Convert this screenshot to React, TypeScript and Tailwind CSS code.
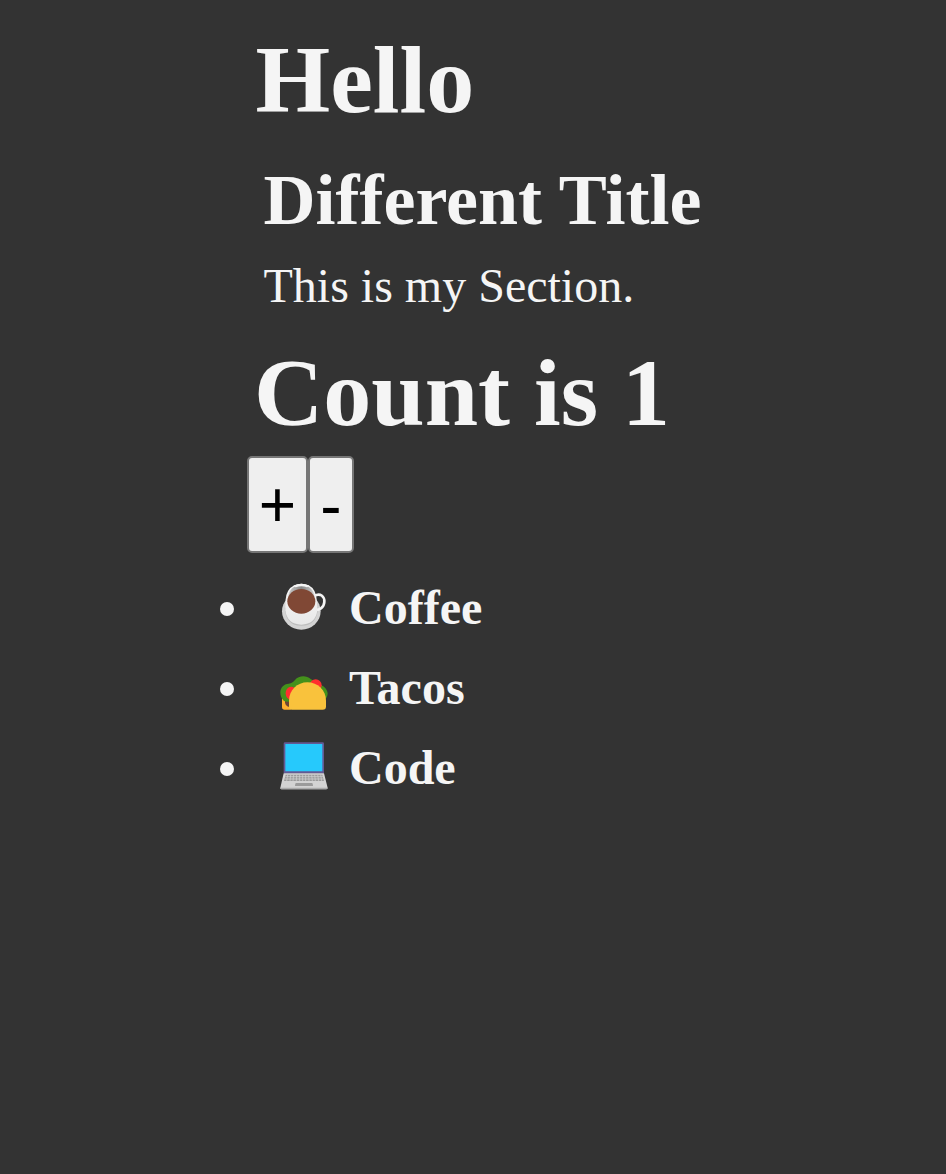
import { useState, type ReactNode } from "react";

function CoffeeIcon() {
  return (
    <svg className="h-20 w-[70px]" viewBox="0 0 210 240" aria-hidden="true">
      <defs>
        <linearGradient id="cup" x1="0" y1="0" x2="0" y2="1">
          <stop offset="0" stopColor="#f7f7f7" />
          <stop offset="1" stopColor="#e8e8e8" />
        </linearGradient>
        <linearGradient id="inner" x1="0" y1="0" x2="1" y2="0">
          <stop offset="0" stopColor="#d0d0d0" />
          <stop offset=".5" stopColor="#858585" />
          <stop offset="1" stopColor="#d0d0d0" />
        </linearGradient>
      </defs>
      <g transform="translate(0 21)">
        <ellipse cx="94" cy="109" rx="58" ry="55" fill="#d3d3d3" />
        <path d="M44 98Q47 152 94 152Q141 152 144 98Z" fill="#bdbdbd" />
        <path d="M132 63C151 52 164 64 163 81C162 97 148 108 130 103" fill="none" stroke="#f4f4f4" strokeWidth="8" />
        <path d="M47 73Q50 42 73 31Q94 22 116 31Q137 42 140 73L142 106Q137 148 94 149Q51 148 46 106Z" fill="url(#cup)" />
        <path d="M54 67Q59 31 94 31Q129 31 134 67Z" fill="url(#inner)" />
        <path d="M70 32Q94 21 118 32L111 37Q94 31 77 37Z" fill="#f5f5f5" />
        <ellipse cx="94" cy="79" rx="42" ry="37" fill="#804835" />
      </g>
    </svg>
  );
}

function TacoIcon() {
  return (
    <svg className="h-20 w-[70px]" viewBox="0 0 210 240" aria-hidden="true">
      <g transform="translate(0 51)">
        <path d="M36 94H62V134H44Q36 134 36 126Z" fill="#ffb02e" />
        <path d="M45 94H64V125H54Q46 122 45 113Z" fill="#6d4534" />
        <path d="M42 108C34 101 31 92 31 82C31 68 41 57 56 56C65 55 69 52 75 45C86 32 108 30 122 42L151 59C164 64 172 74 173 85C173 94 169 101 162 106L50 110Z" fill="#44911b" />
        <circle cx="137" cy="61" r="18" fill="#ff2e2e" />
        <path d="M73 68C57 60 47 73 47 85C47 94 51 101 59 104Z" fill="#ff2e2e" />
        <path d="M57 107C57 76 82 52 112 52C143 52 168 76 168 107V125Q168 134 158 134H66Q57 134 57 125Z" fill="#f9c23c" />
      </g>
    </svg>
  );
}

function LaptopIcon() {
  return (
    <svg className="h-20 w-[70px]" viewBox="0 0 210 240" aria-hidden="true">
      <g transform="translate(0 21)">
        <rect x="41" y="22" width="121" height="94" rx="4" fill="#635994" />
        <rect x="46" y="27" width="111" height="82" rx="1" fill="#26c9fc" />
        <path d="M41 115H162L173 158Q173 163 168 163H35Q30 163 31 158Z" fill="#d3d3d3" />
        <path d="M31 158H173Q173 163 168 163H35Q30 163 31 158Z" fill="#ababab" />
        <path d="M47 119H157L162 138H42Z" fill="#9b9b9b" />
        <path d="M46 125H159M44 132H161M53 119L50 138M62 119L60 138M71 119L69 138M80 119L79 138M89 119V138M98 119V138M107 119V138M116 119L117 138M125 119L127 138M134 119L136 138M143 119L146 138M152 119L155 138" stroke="#d3d3d3" strokeWidth="2" />
        <path d="M78 144H126Q129 144 129 153H75Q75 144 78 144Z" fill="#9b9b9b" />
      </g>
    </svg>
  );
}

const items: { name: string; icon: ReactNode }[] = [
  { name: "Coffee", icon: <CoffeeIcon /> },
  { name: "Tacos", icon: <TacoIcon /> },
  { name: "Code", icon: <LaptopIcon /> },
];

const buttonClass =
  "flex h-[97px] items-center justify-center rounded-[5px] border-2 border-[#767676] bg-[#efefef] font-['Liberation_Sans',sans-serif] text-[64px] leading-none text-black";

export default function App() {
  const [count, setCount] = useState(1);
  return (
    <main className="flex min-h-screen flex-col bg-[#333] pt-8 font-['Liberation_Serif',serif] text-[#f5f5f5]">
      <h1 className="ml-[255.5px] text-[96px] leading-none font-bold">Hello</h1>
      <section className="mt-9 ml-[263.5px]">
        <h2 className="text-[72px] leading-none font-bold">Different Title</h2>
        <p className="mt-[26px] text-[48px] leading-none">This is my Section.</p>
      </section>
      <h1 className="mt-[35px] ml-[254px] text-[96px] leading-none font-bold">Count is {count}</h1>
      <div className="mt-[15px] ml-[247px] flex h-[97px]">
        <button className={`w-[61px] ${buttonClass}`} onClick={() => setCount((c) => c + 1)}>+</button>
        <button className={`w-[46px] pt-0.5 ${buttonClass}`} onClick={() => setCount((c) => c - 1)}>-</button>
      </div>
      <ul className="mt-[15px] ml-[220px] text-[48px] leading-[80px] font-bold">
        {items.map((item) => (
          <li key={item.name} className="flex h-20 items-center">
            <span className="mt-0.5 mr-9 size-3.5 rounded-full bg-[#f5f5f5]" />
            {item.icon}
            <span className="ml-[9px]">{item.name}</span>
          </li>
        ))}
      </ul>
    </main>
  );
}
